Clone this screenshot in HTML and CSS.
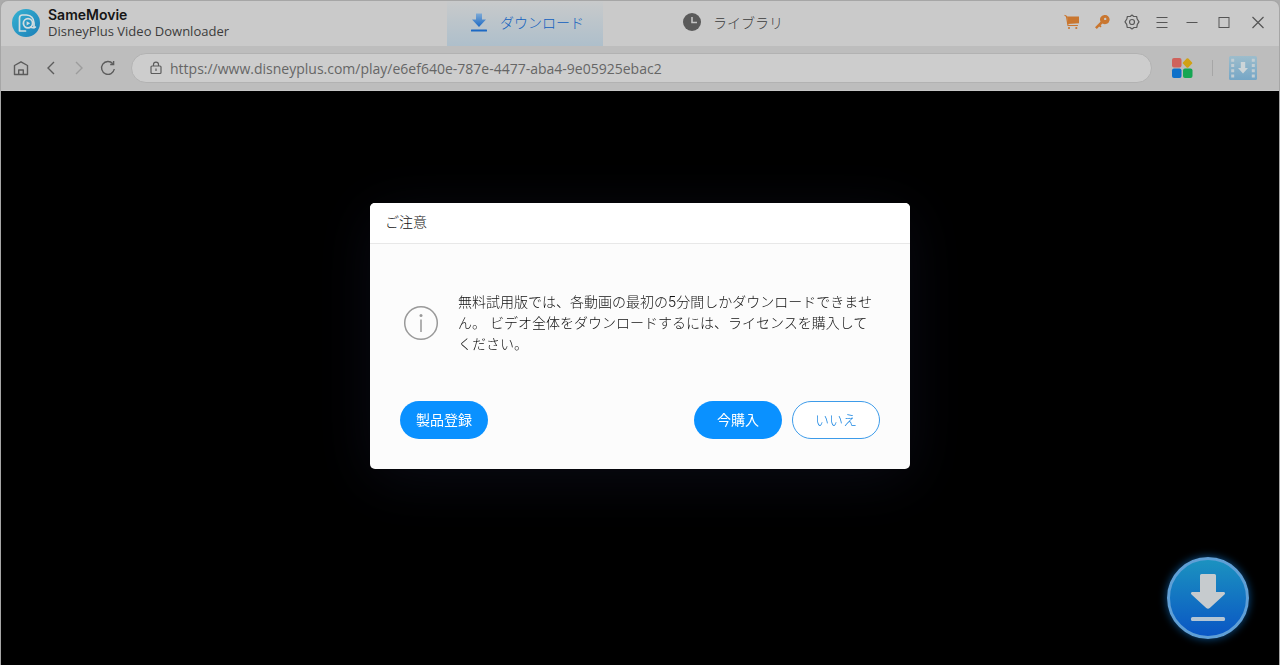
FILE: index.html
```html
<!DOCTYPE html>
<html lang="ja">
  <head>
    <meta charset="UTF-8" />
    <meta name="viewport" content="width=device-width, initial-scale=1.0" />
    <title>SameMovie DisneyPlus Video Downloader</title>
    <link rel="stylesheet" href="styles.css">
  </head>
  <body>
    <div class="window">
      <header class="titlebar">
        <div class="brand">
          <svg class="brand-logo" viewBox="0 0 28 28" width="28" height="28" aria-hidden="true">
            <defs>
              <linearGradient id="logo-fill" x1="0" y1="0" x2="1" y2="1">
                <stop offset="0" stop-color="#35b2d2" />
                <stop offset="1" stop-color="#1c7fb8" />
              </linearGradient>
            </defs>
            <circle cx="14" cy="14" r="14" fill="url(#logo-fill)" />
            <path d="M13.500 22H7.500V9Q7.500 6 10.500 6H14.500Q21.500 6.500 22 14V18.500" fill="none" stroke="#d3dde0" stroke-width="1.700" stroke-linecap="round" stroke-linejoin="round" />
            <circle cx="16" cy="14.300" r="4.600" fill="none" stroke="#d3dde0" stroke-width="1.800" />
            <path d="M14.600 12.200L18.200 14.300L14.600 16.400Z" fill="#d3dde0" />
            <path d="M18.500 18Q20.500 19.500 23.500 18" fill="none" stroke="#d3dde0" stroke-width="1.500" stroke-linecap="round" />
          </svg>
          <div>
            <div class="brand-name">SameMovie</div>
            <div class="brand-product">DisneyPlus Video Downloader</div>
          </div>
        </div>

        <nav class="tabs">
          <a class="tab active" href="#download">
            <svg viewBox="0 0 18 20" width="18" height="20" aria-hidden="true">
              <defs>
                <linearGradient id="tab-arrow" x1="0" y1="0" x2="0" y2="1">
                  <stop offset="0" stop-color="#7eaad6" />
                  <stop offset="1" stop-color="#1c69c4" />
                </linearGradient>
              </defs>
              <path d="M6 1.500H12V7.500H16L9 15L2 7.500H6Z" fill="url(#tab-arrow)" />
              <rect x="1" y="17.500" width="16" height="2" rx="0.500" fill="#1c69c4" />
            </svg>
            ダウンロード
          </a>
          <a class="tab" href="#library">
            <svg viewBox="0 0 18 18" width="18" height="18" aria-hidden="true">
              <circle cx="9" cy="9" r="9" fill="#5a5a5a" />
              <path d="M9 4V9.500H14" fill="none" stroke="#c4c4c4" stroke-width="1.600" />
            </svg>
            ライブラリ
          </a>
        </nav>

        <div class="window-actions">
          <button class="icon-btn" aria-label="購入">
            <svg viewBox="0 0 16 16" width="16" height="16">
              <path d="M1 1.500L2.500 2.300L4 11.500H13.500" fill="none" stroke="#c9762f" stroke-width="1.200" stroke-linecap="round" />
              <path d="M3 2.500H15V9.300L4 10Z" fill="#c9762f" />
              <circle cx="5" cy="14" r="1.100" fill="#c9762f" />
              <circle cx="12.300" cy="14" r="1.100" fill="#c9762f" />
            </svg>
          </button>
          <button class="icon-btn" aria-label="登録">
            <svg viewBox="0 0 16 16" width="16" height="16">
              <path fill-rule="evenodd" d="M10.300 1A4.600 4.600 0 1 1 8.500 9.400L6.600 11.300L7.600 12.300L6.300 13.600L5.200 12.600L2.800 15L1 13.200L6.500 7.700A4.600 4.600 0 0 1 10.300 1ZM11.200 3.700A1.200 1.200 0 1 0 11.200 6.100A1.200 1.200 0 1 0 11.200 3.700Z" fill="#c9762f" />
            </svg>
          </button>
          <button class="icon-btn" aria-label="設定">
            <svg viewBox="0 0 16 16" width="16" height="16" fill="none" stroke="#5a5a5a" stroke-width="1.200" stroke-linejoin="round">
              <path d="M8 1L9.800 2.500L12.600 2.500L13.200 5L15 7.900L13.300 10.400L12.800 13.300L10 13.500L8 15L6 13.500L3.200 13.300L2.700 10.400L1 7.900L2.800 5L3.400 2.500L6.200 2.500Z" />
              <circle cx="8" cy="8" r="2.500" />
            </svg>
          </button>
          <button class="icon-btn" aria-label="メニュー">
            <svg viewBox="0 0 16 16" width="16" height="16" stroke="#555555" stroke-width="1.200">
              <path d="M2.500 3.500H13.500M2.500 8.500H13.500M2.500 13.500H13.500" />
            </svg>
          </button>
          <button class="icon-btn" aria-label="最小化">
            <svg viewBox="0 0 16 16" width="16" height="16" stroke="#555555" stroke-width="1.200">
              <path d="M2.500 8.500H13.500" />
            </svg>
          </button>
          <button class="icon-btn wide" aria-label="最大化">
            <svg viewBox="0 0 16 16" width="16" height="16" stroke="#555555" fill="none">
              <rect x="3" y="3.500" width="10" height="10" />
            </svg>
          </button>
          <button class="icon-btn wide" aria-label="閉じる">
            <svg viewBox="0 0 16 16" width="16" height="16" stroke="#555555" stroke-width="1.200">
              <path d="M2.500 3L13.500 14M13.500 3L2.500 14" />
            </svg>
          </button>
        </div>
      </header>

      <div class="toolbar">
        <button class="icon-btn nav-btn" aria-label="ホーム">
          <svg viewBox="0 0 16 16" width="16" height="16" fill="none" stroke="#5c5c5c" stroke-width="1.400" stroke-linejoin="round">
            <path d="M1.500 5.500L8 1.800L14.500 5.500V14.500H1.500Z" />
            <path d="M5.700 14.500V10H10.300V14.500" />
          </svg>
        </button>
        <button class="icon-btn nav-btn" aria-label="戻る">
          <svg viewBox="0 0 16 16" width="16" height="16" fill="none" stroke="#5c5c5c" stroke-width="1.400">
            <path d="M12 2L6 8L12 14" />
          </svg>
        </button>
        <button class="icon-btn nav-btn" aria-label="進む">
          <svg viewBox="0 0 16 16" width="16" height="16" fill="none" stroke="#9c9c9c" stroke-width="1.400">
            <path d="M5 2L11 8L5 14" />
          </svg>
        </button>
        <button class="icon-btn nav-btn" aria-label="再読み込み">
          <svg viewBox="0 0 16 16" width="16" height="16" fill="none" stroke="#5c5c5c" stroke-width="1.400">
            <path d="M14.300 9A6.400 6.400 0 1 1 12.800 3.700" />
            <path d="M13.600 1V4.500H10.200" />
          </svg>
        </button>
        <label class="address">
          <svg viewBox="0 0 12 14" width="12" height="14" fill="none" stroke="#5c5c5c" stroke-width="1.200" aria-hidden="true">
            <rect x="1" y="5" width="10" height="7.500" rx="1" />
            <path d="M3.500 5V3.600A2.500 2.500 0 0 1 8.500 3.600V5M6 7.500V10" />
          </svg>
          <input type="text" aria-label="URL" value="https://www.disneyplus.com/play/e6ef640e-787e-4477-aba4-9e05925ebac2" />
        </label>
        <button class="icon-btn apps" aria-label="サイト一覧">
          <svg viewBox="0 0 22 20" width="22" height="20">
            <rect x="1" y="0" width="9.500" height="9.500" rx="2" fill="#cf625c" />
            <rect x="12.800" y="1.300" width="7.400" height="7.400" rx="1.200" fill="#d1a115" transform="rotate(45 16.500 5)" />
            <rect x="1" y="10.500" width="9.500" height="9.500" rx="2" fill="#0d70c9" />
            <rect x="12" y="10.500" width="9.500" height="9.500" rx="2" fill="#16a653" />
          </svg>
        </button>
        <span class="divider"></span>
        <button class="icon-btn grab" aria-label="動画を検出">
          <svg viewBox="0 0 28 24" width="28" height="24">
            <defs>
              <linearGradient id="film-fill" x1="0" y1="0" x2="0" y2="1">
                <stop offset="0" stop-color="#9dbdcc" />
                <stop offset="1" stop-color="#75a6c6" />
              </linearGradient>
            </defs>
            <rect width="28" height="24" rx="1.500" fill="url(#film-fill)" />
            <path d="M3.700 2.800V22M24.300 2.800V22" stroke="#c2ced4" stroke-width="3" stroke-dasharray="3 2.200" />
            <path d="M11.800 6H16.200V12H19L14 17.500L9 12H11.800Z" fill="#cdd5d8" />
          </svg>
        </button>
      </div>

      <main class="viewport"></main>

      <button class="download-fab" aria-label="ダウンロード">
        <svg viewBox="0 0 36 48" width="36" height="48">
          <path d="M11.500 0H24.500Q26 0 26 1.500V18H33.500Q36 18.500 34.500 20.500L19.800 34Q18 35.500 16.200 34L1.500 20.500Q0 18.500 2.500 18H10V1.500Q10 0 11.500 0Z" fill="#c6cbce" />
          <rect x="1" y="43" width="34" height="4" rx="1.500" fill="#b4c5d4" />
        </svg>
      </button>
    </div>

    <div class="overlay">
      <div class="dialog" role="dialog" aria-labelledby="dialog-title">
        <h1 class="dialog-title" id="dialog-title">ご注意</h1>
        <div class="dialog-body">
          <svg class="info-icon" viewBox="0 0 36 36" width="36" height="36" aria-hidden="true">
            <circle cx="18" cy="18" r="16.300" fill="none" stroke="#999999" stroke-width="1.500" />
            <circle cx="18" cy="10.500" r="1.500" fill="#999999" />
            <path d="M18 14.500V27" stroke="#999999" stroke-width="1.500" />
          </svg>
          <p>無料試用版では、各動画の最初の5分間しかダウンロードできません。 ビデオ全体をダウンロードするには、ライセンスを購入してください。</p>
        </div>
        <div class="dialog-actions">
          <button class="btn btn-primary register">製品登録</button>
          <button class="btn btn-primary">今購入</button>
          <button class="btn btn-outline">いいえ</button>
        </div>
      </div>
    </div>
  </body>
</html>
```
FILE: styles.css
```css
* {
  box-sizing: border-box;
}
body {
  margin: 0;
  background-color: #ababab;
  font-family: Inter, "Noto Sans CJK JP", sans-serif;
  font-size: 14px;
}
button {
  padding: 0;
  border: none;
  background: none;
  font: inherit;
  cursor: pointer;
}
svg {
  display: block;
  flex: none;
}
.window {
  display: flex;
  flex-direction: column;
  min-height: 100vh;
  border: 1px solid #a6a6a6;
  border-bottom: none;
  border-radius: 8px 8px 0 0;
  overflow: hidden;
}

/* title bar */
.titlebar {
  display: grid;
  grid-template-columns: 35% auto 1fr;
  height: 45px;
  padding-right: 4px;
  background-color: #cacaca;
}
.brand {
  display: flex;
  align-items: center;
  gap: 8px;
  padding: 0 0 1px 11px;
}
.brand-name {
  color: #161616;
  font-size: 14px;
  font-weight: 600;
  line-height: 16px;
}
.brand-product {
  color: #3c3c3c;
  font-family: "Open Sans", sans-serif;
  font-size: 13px;
  font-weight: 500;
  line-height: 17px;
  white-space: nowrap;
}
.tabs {
  display: flex;
  gap: 50px;
}
.tab {
  display: flex;
  align-items: center;
  justify-content: center;
  gap: 12px;
  width: 156px;
  padding: 0 0 4px 4px;
  color: #3c3c3c;
  font-weight: 300;
  text-decoration: none;
}
.tab.active {
  background: linear-gradient(#c8cacb, #aebfcb);
  color: #0f5fbe;
}
.window-actions {
  display: flex;
  align-items: center;
  justify-content: flex-end;
  padding-bottom: 4px;
}
.icon-btn {
  display: flex;
  align-items: center;
  justify-content: center;
  width: 30px;
  height: 30px;
}
.icon-btn.wide {
  width: 34px;
}

/* address bar */
.toolbar {
  display: flex;
  align-items: center;
  height: 45px;
  padding: 0 21px 0 5px;
  background-color: #bdbdbd;
  border-bottom: 1px solid #c6c6c6;
}
.nav-btn {
  width: 29px;
}
.address {
  display: flex;
  flex: 1;
  align-items: center;
  gap: 8px;
  height: 30px;
  margin-left: 9px;
  padding: 0 18px;
  background-color: #cdcdcd;
  border: 1px solid #b2b2b2;
  border-radius: 15px;
}
.address input {
  flex: 1;
  min-width: 0;
  padding: 0;
  border: none;
  outline: none;
  background: none;
  color: #666666;
  font-family: "Open Sans", sans-serif;
  font-size: 14px;
}
.apps {
  margin: 0 15px;
}
.divider {
  width: 1px;
  height: 16px;
  background-color: #a6a6a6;
}
.grab {
  margin-left: 15px;
}

.viewport {
  flex: 1;
  background-color: #000000;
}
.download-fab {
  position: fixed;
  right: 31px;
  bottom: 26px;
  display: flex;
  align-items: center;
  justify-content: center;
  width: 82px;
  height: 82px;
  border: 3px solid #5f9fd6;
  border-radius: 50%;
  background: linear-gradient(#1b92c0, #0a56c4);
  box-shadow: 0 0 9px #0a5290;
}

/* notice dialog */
.overlay {
  position: fixed;
  inset: 0;
  display: flex;
  align-items: center;
  justify-content: center;
  padding-top: 7px;
}
.dialog {
  width: 540px;
  background-color: #fcfcfc;
  border-radius: 5px;
  box-shadow: 0 10px 60px #0a0b14;
  overflow: hidden;
}
.dialog-title {
  margin: 0;
  padding: 8px 15px 11px;
  background-color: #ffffff;
  border-bottom: 1px solid #e8e8e8;
  color: #111111;
  font-size: 14px;
  font-weight: 300;
  line-height: 21px;
}
.dialog-body {
  display: flex;
  align-items: center;
  gap: 19px;
  padding: 47px 32px 47px 33px;
}
.dialog-body p {
  margin: 0;
  color: #111111;
  font-weight: 300;
  line-height: 21px;
}
.dialog-actions {
  display: flex;
  gap: 10px;
  padding: 0 30px 30px;
}
.register {
  margin-right: auto;
}
.btn {
  width: 88px;
  height: 38px;
  padding-bottom: 3px;
  border-radius: 19px;
}
.btn-primary {
  background-color: #0a91ff;
  color: #ffffff;
}
.btn-outline {
  border: 1px solid #3d9be9;
  background-color: #ffffff;
  color: #1080e0;
  font-weight: 300;
}
```
